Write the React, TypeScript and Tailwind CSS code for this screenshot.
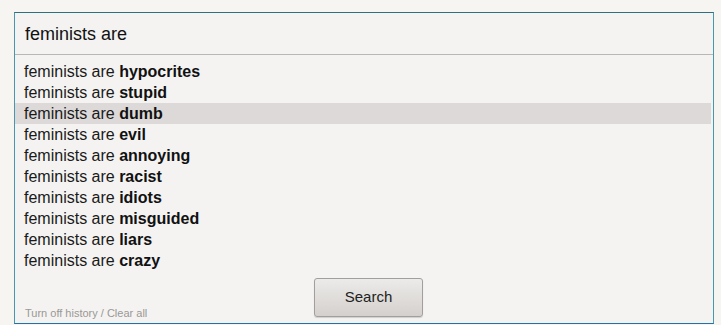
import React from "react";

const items = [
  "hypocrites",
  "stupid",
  "dumb",
  "evil",
  "annoying",
  "racist",
  "idiots",
  "misguided",
  "liars",
  "crazy",
];

export default function App() {
  return (
    <div
      className="w-[721px] h-[325px] bg-[#f6f5f1] pt-[12px] pl-[14px] overflow-hidden"
      style={{ fontFamily: '"Liberation Sans", Arial, sans-serif' }}
    >
      <div className="w-[700px] h-[312px] border border-[#4a97ad] border-t-[#2f6f80] border-b-[#1f73a8] bg-[#f4f3f1] flex flex-col">
        <div className="h-[42px] flex items-center pl-[10px] pt-[2px] text-[18px] text-[#111] border-b border-[#b9b7b4] bg-[#f4f3f1] shrink-0">
          feminists are
        </div>
        <div className="pt-[6px] pr-[2px]">
          {items.map((w, i) => (
            <div
              key={w}
              className={`h-[21px] flex items-center pl-[9px] text-[16px] text-[#1a1a1a] ${
                i === 2 ? "bg-[#dcd9d8]" : ""
              }`}
            >
              <span className="whitespace-pre">feminists are </span>
              <span className="font-bold text-[#111]">{w}</span>
            </div>
          ))}
        </div>
        <div className="flex items-start mt-[7px]">
          <div className="w-[133px] pl-[10px] mt-[29px] text-[11px] text-[#9a9896] whitespace-nowrap leading-[13px]">
            Turn off history / Clear all
          </div>
          <button className="ml-[166px] w-[109px] h-[39px] border border-[#a29e9b] rounded-[3px] bg-gradient-to-b from-[#ecebe9] to-[#d4d0cd] text-[15px] text-[#222] shadow-[0_1px_1px_rgba(0,0,0,0.15)]">
            Search
          </button>
        </div>
      </div>
    </div>
  );
}
